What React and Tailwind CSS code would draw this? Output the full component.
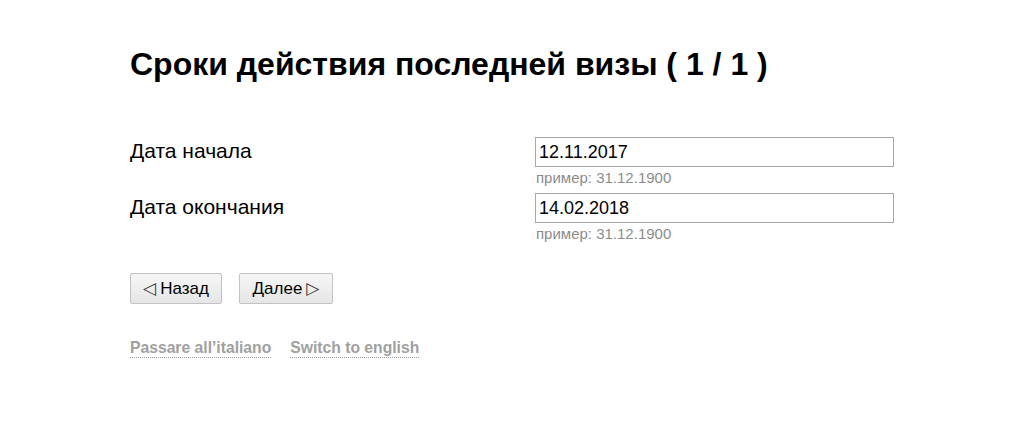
export default function App() {
  return (
    <div className="min-h-screen bg-white font-['Liberation_Sans',Arial,sans-serif] text-black">
      <div className="pl-[130px] pt-[44px]">
        <h1 className="text-[32px] font-bold leading-[40px]">Сроки действия последней визы ( 1 / 1 )</h1>

        {/* FORM */}
        <div className="mt-[53px] w-[764px]">
          <div className="flex">
            <div className="w-[406px] text-[21px] leading-[28px]">Дата начала</div>
            <div>
              <input
                className="h-[30px] w-[359px] border border-[#a9a9a9] px-[3px] text-[18px] outline-none"
                defaultValue="12.11.2017"
              />
              <div className="pl-[1px] pt-[2px] text-[15px] leading-[18px] text-[#8c8c8c]">пример: 31.12.1900</div>
            </div>
          </div>
          <div className="mt-[6px] flex">
            <div className="w-[406px] text-[21px] leading-[28px]">Дата окончания</div>
            <div>
              <input
                className="h-[30px] w-[359px] border border-[#a9a9a9] px-[3px] text-[18px] outline-none"
                defaultValue="14.02.2018"
              />
              <div className="pl-[1px] pt-[2px] text-[15px] leading-[18px] text-[#8c8c8c]">пример: 31.12.1900</div>
            </div>
          </div>
        </div>

        {/* BUTTONS */}
        <div className="mt-[30px] flex gap-[17px]">
          <button className="flex h-[31px] w-[92px] items-center justify-center gap-[4px] rounded-[2px] border border-[#c2c2c2] bg-gradient-to-b from-[#f6f6f6] to-[#e6e6e6] text-[17px]">
            <span className="font-['DejaVu_Sans',sans-serif] text-[17px] leading-none text-[#333]">◁</span>
            Назад
          </button>
          <button className="flex h-[31px] w-[94px] items-center justify-center gap-[4px] rounded-[2px] border border-[#c2c2c2] bg-gradient-to-b from-[#f6f6f6] to-[#e6e6e6] text-[17px]">
            Далее
            <span className="font-['DejaVu_Sans',sans-serif] text-[17px] leading-none text-[#333]">▷</span>
          </button>
        </div>

        {/* LANGUAGE LINKS */}
        <div className="mt-[34px] flex gap-[19px] text-[15.7px] font-bold text-[#a0a0a0]">
          <a href="#" className="border-b border-dotted border-[#999] leading-[19px]">Passare all’italiano</a>
          <a href="#" className="border-b border-dotted border-[#999] leading-[19px]">Switch to english</a>
        </div>
      </div>
    </div>
  );
}
